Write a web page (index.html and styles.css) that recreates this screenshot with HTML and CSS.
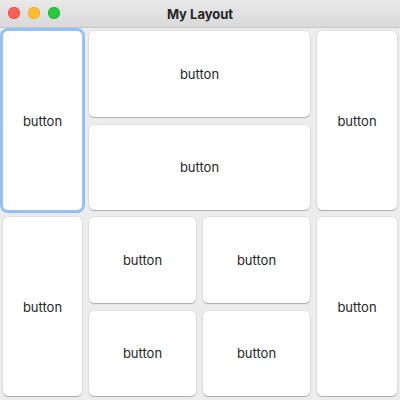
FILE: index.html
```html
<!DOCTYPE html>
<html>
<head>
<meta charset="utf-8">
<link rel="stylesheet" href="styles.css">
</head>
<body>
<div class="window">
  <div class="titlebar">
    <div class="lights">
      <span class="light red"></span>
      <span class="light yellow"></span>
      <span class="light green"></span>
    </div>
    <div class="title">My Layout</div>
  </div>
  <div class="content">
    <div class="row">
      <button class="btn focused">button</button>
      <div class="stack">
        <button class="btn">button</button>
        <button class="btn">button</button>
      </div>
      <button class="btn">button</button>
    </div>
    <div class="row">
      <button class="btn">button</button>
      <div class="quad">
        <button class="btn">button</button>
        <button class="btn">button</button>
        <button class="btn">button</button>
        <button class="btn">button</button>
      </div>
      <button class="btn">button</button>
    </div>
  </div>
</div>
</body>
</html>
```
FILE: styles.css
```css
* { box-sizing: border-box; }
html, body { margin: 0; padding: 0; width: 400px; height: 400px; overflow: hidden; }
body { font-family: "Inter", "Open Sans", "Liberation Sans", sans-serif; background: #ececec; }
.window { width: 400px; height: 400px; display: flex; flex-direction: column; background: #ececec; }
.titlebar {
  height: 28px; flex: none; position: relative;
  background: linear-gradient(#e9e9e9, #d9d9d9);
  border-bottom: 1px solid #c6c6c6;
  display: flex; align-items: center; justify-content: center;
}
.lights { position: absolute; left: 8px; top: 7px; display: flex; gap: 8px; }
.light { width: 12px; height: 12px; border-radius: 50%; display: block; }
.red { background: #fe5f57; box-shadow: inset 0 0 0 0.5px #e0443e; }
.yellow { background: #febc2e; box-shadow: inset 0 0 0 0.5px #dea123; }
.green { background: #28c840; box-shadow: inset 0 0 0 0.5px #1aab29; }
.title { font-size: 13px; font-weight: 700; color: #262626; }
.content { flex: 1; padding: 3px 3px 4px 3px; display: grid; grid-template-rows: 1fr 1fr; gap: 7px; }
.row { display: grid; grid-template-columns: 79px 1fr 80px; gap: 7px; min-height: 0; }
.stack { display: grid; grid-template-rows: 1fr 1fr; gap: 8px; }
.quad { display: grid; grid-template-columns: 1fr 1fr; grid-template-rows: 1fr 1fr; gap: 8px 7px; }
.btn {
  font-family: inherit; font-size: 13px; color: #262626;
  background: #fff; border: none; border-radius: 5px; margin: 0; padding: 0;
  box-shadow: 0 0 0 0.5px rgba(0,0,0,0.1), 0 1px 1px rgba(0,0,0,0.22);
}
.btn.focused { box-shadow: 0 0 0 1px #9ac5f7, 0 0 0 3px rgba(128,184,247,0.85); }
```
